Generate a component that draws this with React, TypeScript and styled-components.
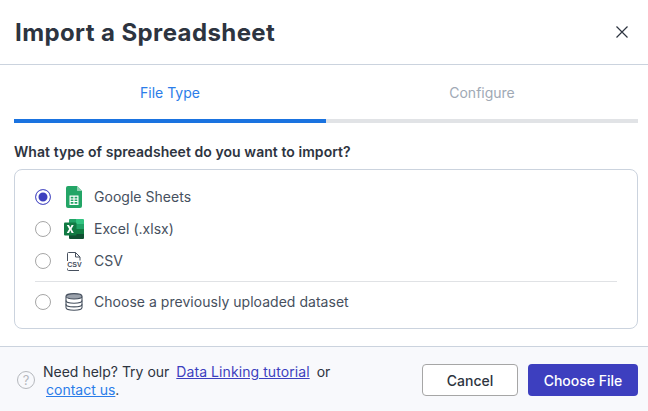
import React from 'react';
import styled, { createGlobalStyle } from 'styled-components';

const Global = createGlobalStyle`
  html, body {
    margin: 0;
    padding: 0;
    background: #ffffff;
  }
  body {
    font-family: Inter, "Liberation Sans", sans-serif;
    color: #2d3440;
  }
`;

function SheetsIcon() {
  return (
    <svg width="16" height="22" viewBox="0 0 16 22">
      <path d="M2 0h9l5 5v15a2 2 0 0 1-2 2H2a2 2 0 0 1-2-2V2a2 2 0 0 1 2-2z" fill="#23a566" />
      <path d="M11 0l5 5h-5z" fill="#8ed1b1" />
      <path d="M3.500 9.500h9V19h-9z M4.700 10.700v1.900h2.700v-1.900z M8.600 10.700v1.900h2.700v-1.900z M4.700 13.500v1.500h2.700v-1.500z M8.600 13.500v1.500h2.700v-1.500z M4.700 16v1.800h2.700V16z M8.600 16v1.800h2.700V16z" fill="#fff" fillRule="evenodd" />
    </svg>
  );
}

function ExcelIcon() {
  return (
    <svg width="20" height="20" viewBox="0 0 20 20">
      <path d="M5 1a1 1 0 0 1 1-1h6v5H5z" fill="#21a366" />
      <path d="M12 0h7a1 1 0 0 1 1 1v4h-8z" fill="#33c481" />
      <path d="M5 5h7v5H5z" fill="#107c41" />
      <path d="M12 5h8v5h-8z" fill="#21a366" />
      <path d="M5 10h7v5H5z" fill="#185c37" />
      <path d="M12 10h8v5h-8z" fill="#107c41" />
      <path d="M5 15h15v4a1 1 0 0 1-1 1H6a1 1 0 0 1-1-1z" fill="#0f5132" />
      <rect x="0" y="3.500" width="12.500" height="13" rx="1" fill="#117a43" />
      <path d="M2.800 6h2.200l1.300 2.600L7.600 6h2.100L7.500 10l2.300 4H7.600l-1.300-2.700L5 14H2.800l2.300-4z" fill="#fff" />
    </svg>
  );
}

function CsvIcon() {
  return (
    <svg width="16" height="19" viewBox="0 0 16 19">
      <path d="M1.500 9V1.500a1 1 0 0 1 1-1h7l4.500 4.500v3.500" fill="none" stroke="#46505e" strokeWidth="1" />
      <path d="M9.500 .5v4.500h4.500" fill="none" stroke="#46505e" strokeWidth="1" />
      <path d="M1.500 16.500v1a1 1 0 0 0 1 1h10.500" fill="none" stroke="#46505e" strokeWidth="1" />
      <text x="8.500" y="15" textAnchor="middle" fontSize="7" fontWeight="700" fontFamily="Liberation Sans, sans-serif" fill="#46505e">CSV</text>
    </svg>
  );
}

function DatabaseIcon() {
  return (
    <svg width="18" height="18" viewBox="0 0 18 18">
      <path d="M1 3.500v11C1 16 4.600 17.200 9 17.200s8-1.200 8-2.700v-11" fill="none" stroke="#46505e" strokeWidth="1.100" />
      <ellipse cx="9" cy="3.300" rx="8" ry="2.700" fill="#9aa1ab" stroke="#46505e" strokeWidth="1.100" />
      <path d="M1 7.500c0 1.500 3.600 2.700 8 2.700s8-1.200 8-2.700" fill="none" stroke="#46505e" strokeWidth="1.100" />
      <path d="M1 11.200c0 1.500 3.600 2.700 8 2.700s8-1.200 8-2.700" fill="none" stroke="#46505e" strokeWidth="1.100" />
    </svg>
  );
}

function CloseIcon() {
  return (
    <svg width="12" height="12" viewBox="0 0 12 12">
      <path d="M.5.5l11 11M11.500.5l-11 11" stroke="#2d3440" strokeWidth="1.200" fill="none" />
    </svg>
  );
}

function App() {
  return (
    <>
      <Global />
      <Dialog>
        <Header>
          <Title>Import a Spreadsheet</Title>
          <CloseButton>
            <CloseIcon />
          </CloseButton>
        </Header>
        <Tabs>
          <Tab $active>File Type</Tab>
          <Tab>Configure</Tab>
        </Tabs>
        <Body>
          <Question>What type of spreadsheet do you want to import?</Question>
          <OptionBox>
            <Option>
              <Radio $checked />
              <IconSlot>
                <SheetsIcon />
              </IconSlot>
              <OptionLabel>Google Sheets</OptionLabel>
            </Option>
            <Option>
              <Radio />
              <IconSlot>
                <ExcelIcon />
              </IconSlot>
              <OptionLabel>Excel (.xlsx)</OptionLabel>
            </Option>
            <Option>
              <Radio />
              <IconSlot>
                <CsvIcon />
              </IconSlot>
              <OptionLabel>CSV</OptionLabel>
            </Option>
            <Divider />
            <Option>
              <Radio />
              <IconSlot>
                <DatabaseIcon />
              </IconSlot>
              <OptionLabel>Choose a previously uploaded dataset</OptionLabel>
            </Option>
          </OptionBox>
        </Body>
        <Footer>
          <Help>
            <HelpMark>?</HelpMark>
            <HelpText>
              Need help? Try our <TutorialLink>Data Linking tutorial</TutorialLink> or
              <br />
              <ContactLink>contact us</ContactLink>.
            </HelpText>
          </Help>
          <Actions>
            <CancelButton>Cancel</CancelButton>
            <PrimaryButton>Choose File</PrimaryButton>
          </Actions>
        </Footer>
      </Dialog>
    </>
  );
}

export default App;

const Dialog = styled.div`
  width: 648px;
  height: 411px;
  display: flex;
  flex-direction: column;
  background: #ffffff;
  overflow: hidden;
`;

const Header = styled.div`
  height: 64px;
  padding: 0 20px 0 15px;
  display: flex;
  align-items: center;
  justify-content: space-between;
  border-bottom: 1px solid #cbd3de;
`;

const Title = styled.div`
  font-size: 24px;
  font-weight: 700;
  letter-spacing: 0.4px;
  color: #2d3440;
`;

const CloseButton = styled.div`
  display: flex;
  width: 12px;
  height: 12px;
`;

const Tabs = styled.div`
  height: 58px;
  margin: 0 10px 0 14px;
  display: flex;
`;

const Tab = styled.div<{ $active?: boolean }>`
  flex: 1;
  display: flex;
  align-items: center;
  justify-content: center;
  font-size: 14px;
  color: ${(p) => (p.$active ? '#2b7de9' : '#a0a9b5')};
  border-bottom: 4px solid ${(p) => (p.$active ? '#1a73e0' : '#e1e3e6')};
`;

const Body = styled.div`
  flex: 1;
  padding: 20px 10px 0 14px;
`;

const Question = styled.div`
  font-size: 14px;
  font-weight: 600;
  line-height: 18px;
  letter-spacing: 0.06px;
  color: #2d3440;
  margin-bottom: 8px;
`;

const OptionBox = styled.div`
  height: 160px;
  box-sizing: border-box;
  padding: 11px 20px 0 20px;
  border: 1px solid #cbd3de;
  border-radius: 8px;
  display: flex;
  flex-direction: column;
`;

const Option = styled.div`
  height: 32px;
  display: flex;
  align-items: center;
  font-size: 14px;
  letter-spacing: 0.03px;
  color: #46505e;
`;

const OptionLabel = styled.span`
  padding-bottom: 2px;
`;

const Radio = styled.span<{ $checked?: boolean }>`
  width: 16px;
  height: 16px;
  box-sizing: border-box;
  border-radius: 50%;
  border: 1.5px solid ${(p) => (p.$checked ? '#5a5cc9' : '#a6a6a6')};
  background: ${(p) => (p.$checked ? '#3d3fbf' : '#ffffff')};
  box-shadow: ${(p) => (p.$checked ? 'inset 0 0 0 2.500px #ffffff' : 'none')};
`;

const IconSlot = styled.span`
  width: 22px;
  margin: 0 9px 0 12px;
  display: flex;
  justify-content: center;
`;

const Divider = styled.div`
  height: 1px;
  background: #e0e2e5;
  margin: 4px 0 4px;
`;

const Footer = styled.div`
  height: 65px;
  box-sizing: border-box;
  padding: 2px 10px 0 17px;
  display: flex;
  align-items: center;
  justify-content: space-between;
  background: #f8f9fc;
  border-top: 1px solid #cbd3de;
`;

const Help = styled.div`
  display: flex;
  align-items: center;
  gap: 8px;
`;

const HelpMark = styled.span`
  width: 18px;
  height: 18px;
  box-sizing: border-box;
  border-radius: 50%;
  border: 1px solid #b5b8bd;
  color: #b5b8bd;
  font-size: 13px;
  line-height: 16px;
  text-align: center;
`;

const HelpText = styled.div`
  padding-top: 2px;
  font-size: 14px;
  line-height: 18px;
  color: #2d3440;
`;

const TutorialLink = styled.a`
  margin: 0 3px 0 3px;
  letter-spacing: 0.08px;
  color: #3d3fbf;
  text-decoration: underline;
`;

const ContactLink = styled.a`
  margin-left: 3px;
  color: #2b7de9;
  text-decoration: underline;
`;

const Actions = styled.div`
  display: flex;
  gap: 10px;
`;

const CancelButton = styled.div`
  width: 96px;
  height: 32px;
  box-sizing: border-box;
  display: flex;
  align-items: center;
  justify-content: center;
  border: 1px solid #a6a6a6;
  border-radius: 4px;
  background: #ffffff;
  font-size: 14px;
  font-weight: 500;
  color: #2d3440;
`;

const PrimaryButton = styled.div`
  width: 110px;
  height: 32px;
  display: flex;
  align-items: center;
  justify-content: center;
  border-radius: 4px;
  background: #3d3fbf;
  font-size: 14px;
  font-weight: 500;
  color: #ffffff;
`;
